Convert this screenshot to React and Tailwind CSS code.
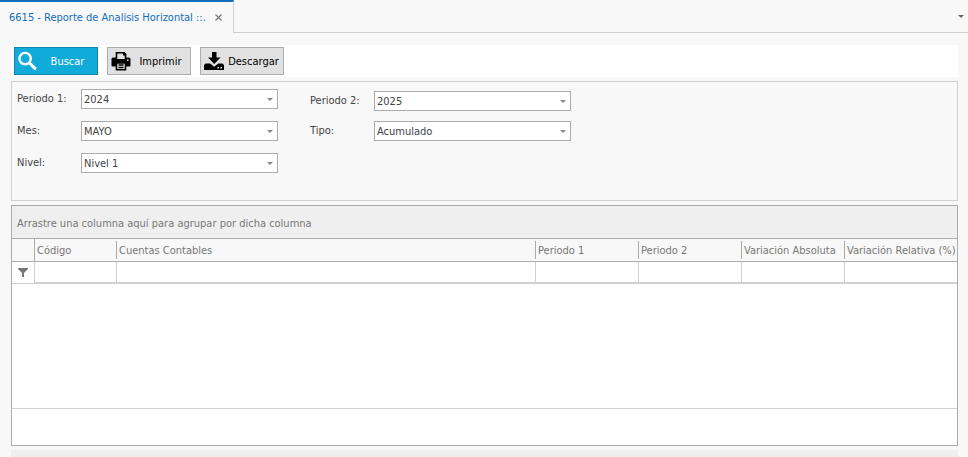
import React, { useState } from 'react';

const COLUMNS = [
    { key: 'codigo', title: 'Código', width: 'w-[82px]' },
    { key: 'cuenta', title: 'Cuentas Contables', width: '' },
    { key: 'periodo1', title: 'Periodo 1', width: 'w-[103px]' },
    { key: 'periodo2', title: 'Periodo 2', width: 'w-[103px]' },
    { key: 'absoluta', title: 'Variación Absoluta', width: 'w-[103px]' },
    { key: 'relativa', title: 'Variación Relativa (%)', width: 'w-[113px]' },
];

const MESES = ['ENERO', 'FEBRERO', 'MARZO', 'ABRIL', 'MAYO', 'JUNIO', 'JULIO', 'AGOSTO', 'SETIEMBRE', 'OCTUBRE', 'NOVIEMBRE', 'DICIEMBRE'];

// --- Icons ---
const CaretIcon = ({ className }) => (
    <svg className={className} width="6" height="3" viewBox="0 0 6 3" fill="currentColor" aria-hidden="true">
        <path d="M0 0h6L3 3z" />
    </svg>
);

const SearchIcon = () => (
    <svg width="20" height="20" viewBox="0 0 20 20" fill="none" stroke="#fff" aria-hidden="true">
        <circle cx="7.1" cy="7.6" r="5.7" strokeWidth="2.4" />
        <path d="M11.500 12l5.400 5.400" strokeWidth="3" strokeLinecap="round" />
    </svg>
);

const PrinterIcon = () => (
    <svg width="20" height="20" viewBox="0 0 20 20" aria-hidden="true">
        <path d="M5.500 7V1.800h7.200L14.500 3.600V7" fill="none" stroke="#000" strokeWidth="1.600" />
        <path d="M12 1h1.500L15.300 3v1.500H12z" fill="#000" />
        <path d="M2 6.500h3.500l1 1.500h7l1-1.500H18a1.500 1.500 0 0 1 1.500 1.500v6.500a1 1 0 0 1-1 1H15V12H5v3.500H1.500a1 1 0 0 1-1-1V8A1.500 1.500 0 0 1 2 6.500z" fill="#000" />
        <rect x="16" y="8.500" width="1.500" height="1.500" fill="#e1e1e1" />
        <path d="M5.500 12v6.700h9V12z" fill="#e1e1e1" stroke="#000" strokeWidth="1.600" />
        <path d="M7.500 14h5M7.500 16.500h5" stroke="#000" strokeWidth="1.300" />
    </svg>
);

const DownloadIcon = () => (
    <svg width="20" height="20" viewBox="0 0 20 20" fill="#000" aria-hidden="true">
        <path d="M8 1h4.500v5.500h4L10.200 13 4 6.500h4z" />
        <path d="M1.500 12.500h4.700l4 3.300 4-3.300h4.300L20 14v5H0v-5z" />
        <path d="M13.500 16h1.500v1.500h-1.500zM16.500 16H18v1.500h-1.500z" fill="#e1e1e1" />
    </svg>
);

const FilterIcon = () => (
    <svg width="10" height="9" viewBox="0 0 10 9" fill="#777" aria-hidden="true">
        <path d="M0 0h10v1L6 5v4H4V5L0 1z" />
    </svg>
);

// --- Form pieces ---
const ToolButton = ({ icon, children, primary }) => (
    <button
        type="button"
        className={`flex h-7 w-[84px] items-center border pl-[3px] ${
            primary ? 'border-[#1586a8] bg-[#10abd8] text-white' : 'border-[#adadad] bg-[#e1e1e1] text-black'
        }`}
    >
        {icon}
        <span className="flex-1 pt-[2px] text-center whitespace-nowrap">{children}</span>
    </button>
);

const SelectField = ({ id, label, value, options, onChange }) => (
    <div className="flex items-center">
        <label htmlFor={id} className="w-16 text-[#444]">{label}</label>
        <div className="relative">
            <select
                id={id}
                value={value}
                onChange={(e) => onChange(id, e.target.value)}
                className="block h-5 w-[197px] appearance-none border border-[#ababab] bg-white px-[2px] pt-[2px] text-[#444] outline-none"
            >
                {options.map((o) => <option key={o}>{o}</option>)}
            </select>
            <CaretIcon className="pointer-events-none absolute top-[9px] right-[5px] text-[#888]" />
        </div>
    </div>
);

const App = () => {
    const [form, setForm] = useState({ periodo1: '2024', mes: 'MAYO', nivel: 'Nivel 1', periodo2: '2025', tipo: 'Acumulado' });

    const handleChange = (id, value) => setForm((prev) => ({ ...prev, [id]: value }));

    return (
        <div className="flex min-h-screen flex-col bg-[#f8f8f8] font-['DejaVu_Sans_Condensed','DejaVu_Sans',sans-serif] text-[11px] leading-4">
            {/* Tabs */}
            <header className="flex h-[33px]">
                <div className="flex w-[234px] items-center border-t-2 border-r border-t-[#106ebe] border-r-[#d0d0d0] pl-[9px]">
                    <span className="flex-1 whitespace-nowrap text-[#106ebe]">6615 - Reporte de Analisis Horizontal ::.</span>
                    <button type="button" aria-label="Cerrar" className="mr-[11px]">
                        <svg width="7" height="7" viewBox="0 0 7 7" stroke="#777" strokeWidth="1.2" aria-hidden="true">
                            <path d="M.5.5l6 6M6.500.5l-6 6" />
                        </svg>
                    </button>
                </div>
                <div className="flex flex-1 items-center justify-end border-b border-[#d0d0d0] pr-1">
                    <button type="button" aria-label="Ver pestañas">
                        <CaretIcon className="text-[#666]" />
                    </button>
                </div>
            </header>

            <main className="flex flex-1 flex-col gap-1 pt-3 pr-[10px] pl-[11px]">
                {/* Toolbar */}
                <div className="flex h-8 items-center gap-[9px] bg-white px-[3px]">
                    <ToolButton icon={<SearchIcon />} primary>Buscar</ToolButton>
                    <ToolButton icon={<PrinterIcon />}>Imprimir</ToolButton>
                    <ToolButton icon={<DownloadIcon />}>Descargar</ToolButton>
                </div>

                {/* Filters */}
                <form className="flex gap-8 border border-[#d0d0d0] px-[5px] pt-[7px] pb-[27px]">
                    <div className="flex flex-col gap-3">
                        <SelectField id="periodo1" label="Periodo 1:" value={form.periodo1} options={['2023', '2024', '2025']} onChange={handleChange} />
                        <SelectField id="mes" label="Mes:" value={form.mes} options={MESES} onChange={handleChange} />
                        <SelectField id="nivel" label="Nivel:" value={form.nivel} options={['Nivel 1', 'Nivel 2', 'Nivel 3']} onChange={handleChange} />
                    </div>
                    <div className="flex flex-col gap-[10px] pt-[2px]">
                        <SelectField id="periodo2" label="Periodo 2:" value={form.periodo2} options={['2023', '2024', '2025']} onChange={handleChange} />
                        <SelectField id="tipo" label="Tipo:" value={form.tipo} options={['Acumulado', 'Mensual']} onChange={handleChange} />
                    </div>
                </form>

                {/* Grid */}
                <section className="flex flex-1 flex-col border border-[#ababab] bg-white text-[#777]">
                    <div className="flex h-8 items-center bg-[#efefef] px-[5px] pt-[4px]">
                        Arrastre una columna aquí para agrupar por dicha columna
                    </div>
                    <table className="w-full table-fixed border-separate border-spacing-0">
                        <thead>
                            <tr className="h-6 bg-[#f8f8f8]">
                                <th className="w-[22px] border-y border-[#ababab] p-0" aria-label="Filtro" />
                                {COLUMNS.map((col, i) => (
                                    <th
                                        key={col.key}
                                        className={`border-y border-[#ababab] p-0 text-left font-normal whitespace-nowrap ${col.width}`}
                                    >
                                        <div className={`flex items-center border-l border-[#ababab] pt-[2px] pl-[2px] ${i === 0 ? 'h-[22px]' : 'h-[18px]'}`}>
                                            {col.title}
                                        </div>
                                    </th>
                                ))}
                            </tr>
                        </thead>
                        <tbody>
                            <tr>
                                <td className="border-b border-[#d0d0d0] p-0">
                                    <div className="flex justify-center"><FilterIcon /></div>
                                </td>
                                {COLUMNS.map((col) => (
                                    <td key={col.key} className="border-b border-l border-[#d0d0d0] p-0">
                                        <input
                                            type="text"
                                            aria-label={`Filtrar ${col.title}`}
                                            className="block h-[21px] w-full border-b border-[#d0d0d0] px-1 outline-none"
                                        />
                                    </td>
                                ))}
                            </tr>
                        </tbody>
                    </table>
                    <div className="flex-1" />
                    <div className="h-[37px] border-t border-[#d0d0d0]" />
                </section>

                <div className="h-[7px] bg-[#efefef]" />
            </main>
        </div>
    );
};

export default App;
